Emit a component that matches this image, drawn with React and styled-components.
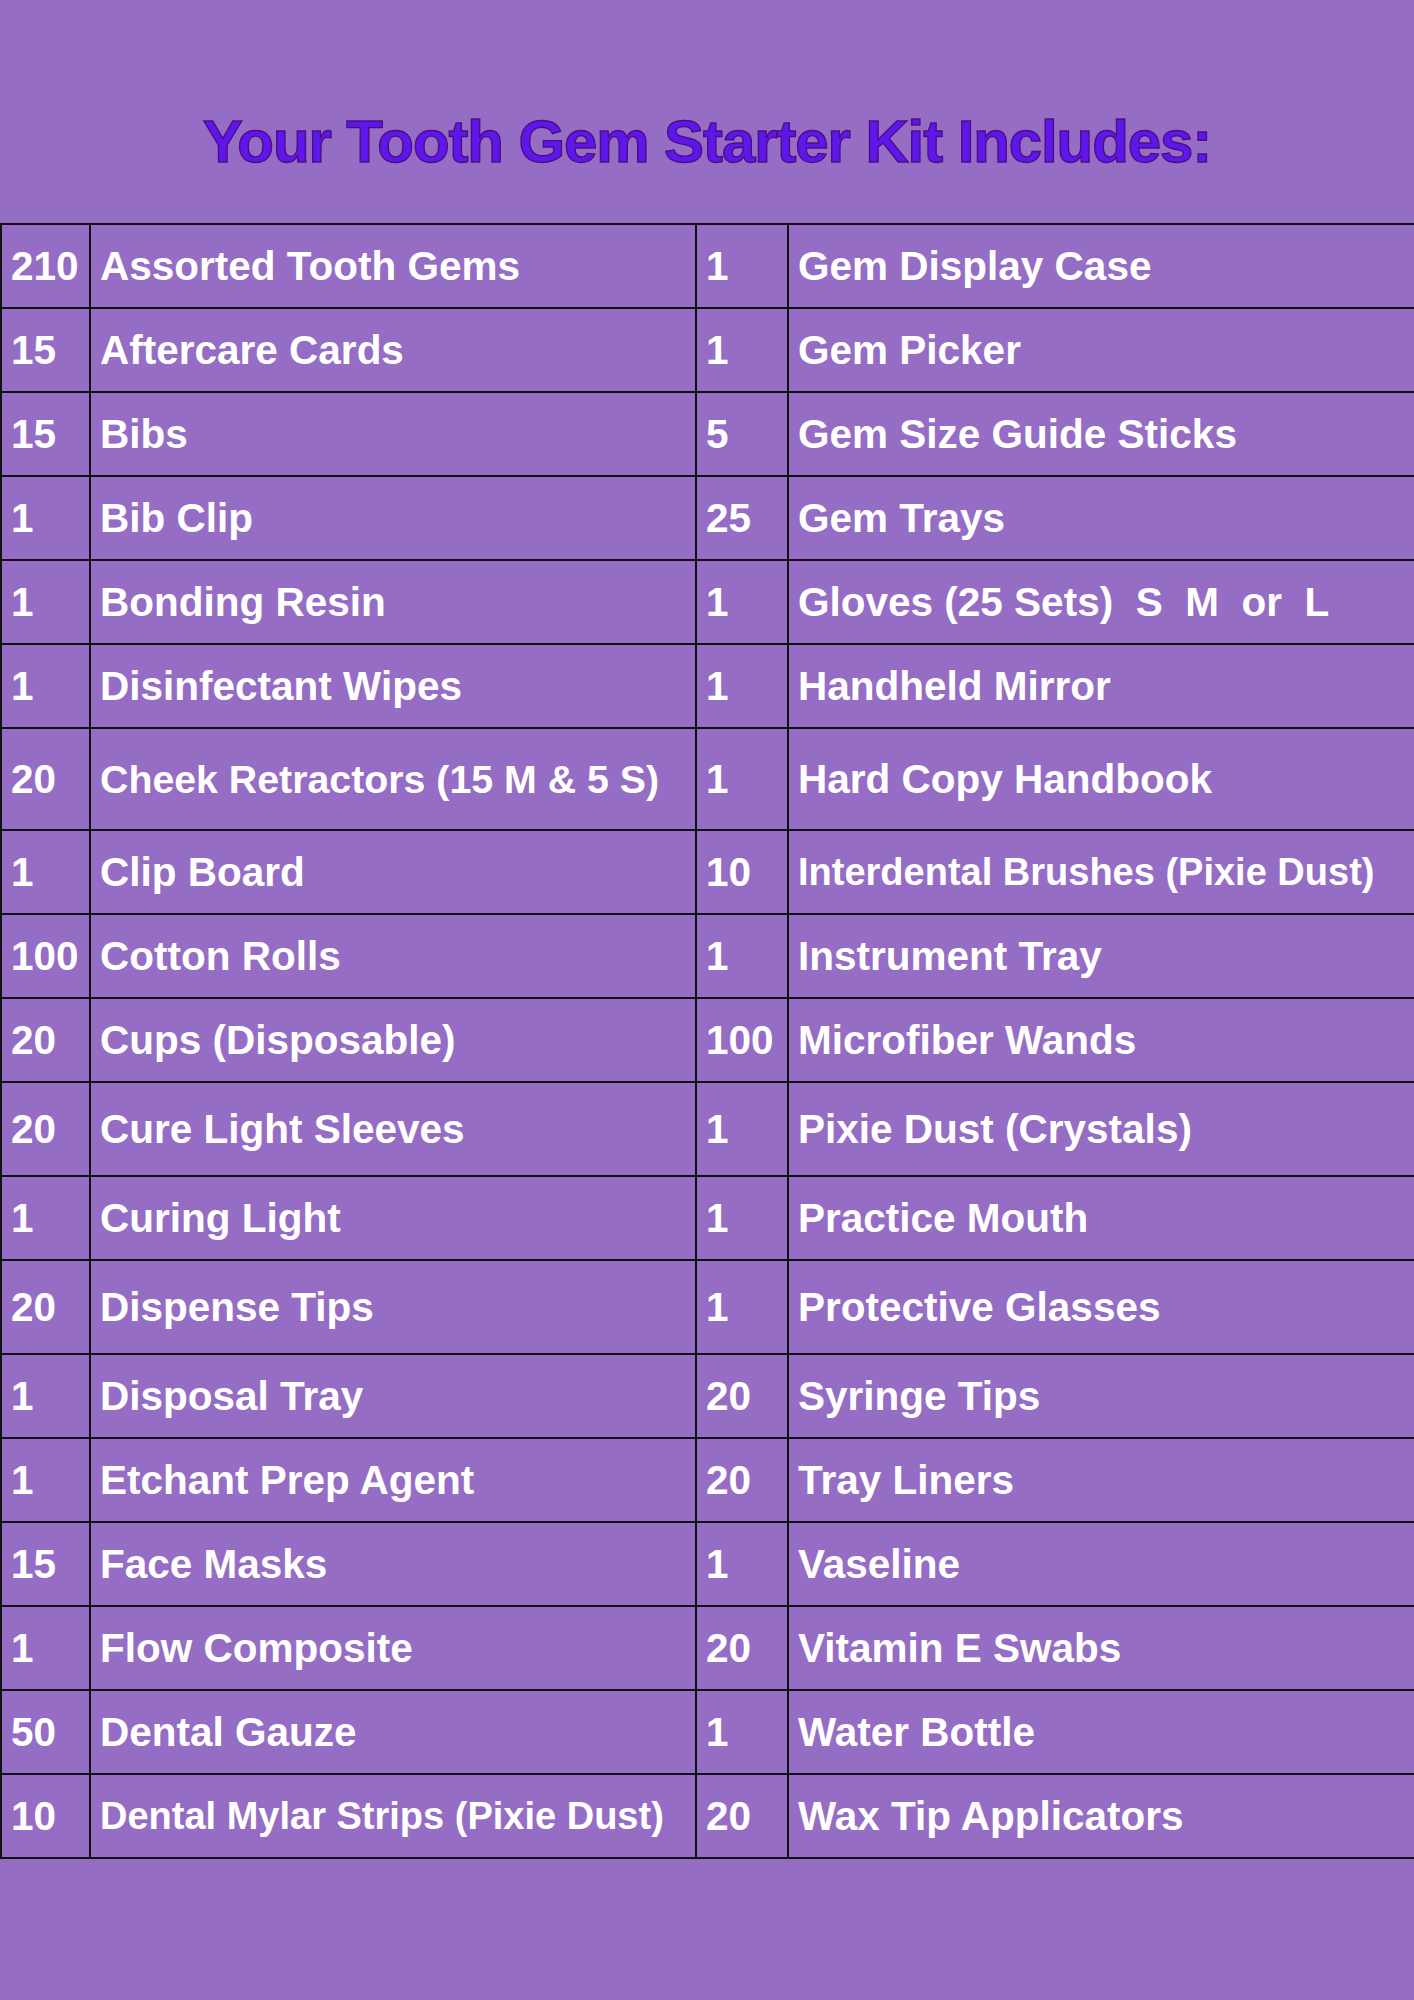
import React from 'react'
import styled, { createGlobalStyle } from 'styled-components'

const rows = [
    { a: '210', b: 'Assorted Tooth Gems', c: '1', d: 'Gem Display Case' },
    { a: '15', b: 'Aftercare Cards', c: '1', d: 'Gem Picker' },
    { a: '15', b: 'Bibs', c: '5', d: 'Gem Size Guide Sticks' },
    { a: '1', b: 'Bib Clip', c: '25', d: 'Gem Trays' },
    { a: '1', b: 'Bonding Resin', c: '1', d: 'Gloves (25 Sets)  S  M  or  L' },
    { a: '1', b: 'Disinfectant Wipes', c: '1', d: 'Handheld Mirror' },
    { a: '20', b: 'Cheek Retractors (15 M & 5 S)', c: '1', d: 'Hard Copy Handbook', h: 102, bSize: 39.3 },
    { a: '1', b: 'Clip Board', c: '10', d: 'Interdental Brushes (Pixie Dust)', dSize: 38 },
    { a: '100', b: 'Cotton Rolls', c: '1', d: 'Instrument Tray' },
    { a: '20', b: 'Cups (Disposable)', c: '100', d: 'Microfiber Wands' },
    { a: '20', b: 'Cure Light Sleeves', c: '1', d: 'Pixie Dust (Crystals)', h: 94 },
    { a: '1', b: 'Curing Light', c: '1', d: 'Practice Mouth' },
    { a: '20', b: 'Dispense Tips', c: '1', d: 'Protective Glasses', h: 94 },
    { a: '1', b: 'Disposal Tray', c: '20', d: 'Syringe Tips' },
    { a: '1', b: 'Etchant Prep Agent', c: '20', d: 'Tray Liners' },
    { a: '15', b: 'Face Masks', c: '1', d: 'Vaseline' },
    { a: '1', b: 'Flow Composite', c: '20', d: 'Vitamin E Swabs' },
    { a: '50', b: 'Dental Gauze', c: '1', d: 'Water Bottle' },
    { a: '10', b: 'Dental Mylar Strips (Pixie Dust)', c: '20', d: 'Wax Tip Applicators', bSize: 38 },
]

function App() {
    return (
        <Page>
            <GlobalStyle />
            <Header>
                <Title>Your Tooth Gem Starter Kit Includes:</Title>
            </Header>
            <KitTable>
                <colgroup>
                    <col style={{ width: 89 }} />
                    <col style={{ width: 606 }} />
                    <col style={{ width: 92 }} />
                    <col style={{ width: 627 }} />
                </colgroup>
                <tbody>
                    {rows.map((row, i) => (
                        <Row key={i} $h={row.h}>
                            <Cell>{row.a}</Cell>
                            <Cell $size={row.bSize}>{row.b}</Cell>
                            <Cell>{row.c}</Cell>
                            <Cell $size={row.dSize}>{row.d}</Cell>
                        </Row>
                    ))}
                </tbody>
            </KitTable>
        </Page>
    )
}

export default App

const GlobalStyle = createGlobalStyle`
    html, body {
        margin: 0;
        padding: 0;
        background-color: #966dc5;
    }
`;

const Page = styled.div`
    width: 1414px;
    min-height: 2000px;
    background-color: #966dc5;
    font-family: "Liberation Sans", Arial, sans-serif;
`;

const Header = styled.div`
    height: 163px;
    padding-top: 60px;
    display: flex;
    align-items: center;
    justify-content: center;
`;

const Title = styled.h1`
    margin: 0;
    font-size: 60px;
    line-height: 1;
    font-weight: 700;
    letter-spacing: -1.1px;
    color: #5e17eb;
    -webkit-text-stroke: 1.4px #4e0c82;
`;

const KitTable = styled.table`
    width: 1414px;
    border-collapse: collapse;
    table-layout: fixed;
    border: 2px solid #111;
`;

const Row = styled.tr`
    height: ${p => p.$h || 84}px;
`;

const Cell = styled.td`
    border: 2px solid #111;
    padding: 0 9px;
    color: #ffffff;
    font-weight: 700;
    font-size: ${p => p.$size || 40.5}px;
    white-space: pre;
    vertical-align: middle;
    overflow: hidden;
`;
